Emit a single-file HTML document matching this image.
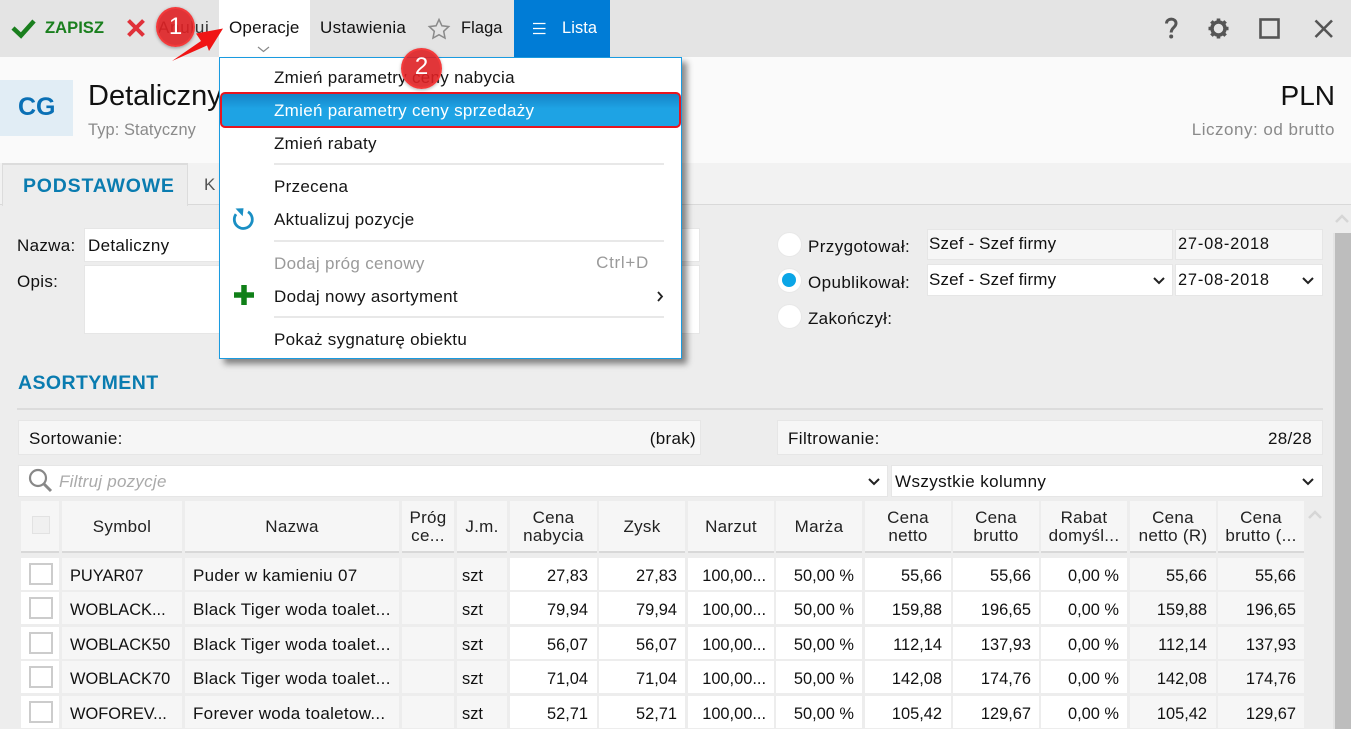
<!DOCTYPE html>
<html lang="pl"><head><meta charset="utf-8"><title>Cennik</title>
<style>
html,body{margin:0;padding:0}
body{width:1351px;height:729px;overflow:hidden;position:relative;background:#ededed;font-family:"Liberation Sans",sans-serif;font-size:17px;letter-spacing:.3px;color:#111}
div,span{position:absolute;box-sizing:border-box}
.t{white-space:nowrap;line-height:22px;height:22px}
svg{position:absolute;overflow:visible}
.box{background:#fff;border:1px solid #e6e6e6}
.gr{background:#f6f6f6;border:1px solid #e6e6e6}
.h{top:501px;height:52px;background:#f6f6f6;border-bottom:2px solid #d8d8d8;text-align:center;line-height:18px;color:#222;display:flex;align-items:center;justify-content:center;padding-top:1px}
.r{height:32px;width:1351px;left:0}
.r div{top:0;height:32px;line-height:36px;white-space:nowrap;overflow:hidden;background:#f6f6f6}
.w{background:#fff!important}
.n,.r .c1,.r .c4{font-size:16.4px;letter-spacing:0}
.n{text-align:right}
.c0{left:21px;width:38px}.c1{left:62px;width:120px;padding-left:8px}.c2{left:185px;width:214px;padding-left:8px}.c3{left:402px;width:52px}.c4{left:457px;width:50px;padding-left:5px}
.c5{left:510px;width:87px;padding-right:9px}.c6{left:599px;width:86px;padding-right:8px}.c7{left:688px;width:86px;padding-right:8px}.c8{left:776px;width:86px;padding-right:8px}.c9{left:865px;width:86px;padding-right:9px}.c10{left:953px;width:86px;padding-right:8px}.c11{left:1041px;width:86px;padding-right:8px}.c12{left:1130px;width:86px;padding-right:9px}.c13{left:1218px;width:86px;padding-right:8px}
.cb{left:8px;top:5px;width:24px;height:22px;background:#fff;border:2px solid #ccc}
.mi{left:54px;white-space:nowrap;line-height:22px;height:22px;color:#151515}
.sep{left:54px;width:390px;height:2px;background:#e8e8e8}
.rad{left:777px;width:25px;height:25px;border-radius:50%;background:#fff;border:1px solid #e8e8e8}
.d{letter-spacing:.8px;font-size:16.4px}
.z{letter-spacing:.15px}
</style></head><body>

<!-- toolbar -->
<div style="left:0;top:0;width:1351px;height:57px;background:#e4e4e4"></div>
<svg style="left:0;top:0" width="1351" height="57">
<path d="M13 28l8 7.500 13-14.500" fill="none" stroke="#1a7f1e" stroke-width="4.500"/>
<path d="M128.500 20.500l15 15M143.500 20.500l-15 15" stroke="#e0313a" stroke-width="4" fill="none"/>
<path d="M439 19.500l2.900 6.300 6.800.8-5 4.700 1.300 6.800-6-3.400-6 3.400 1.300-6.800-5-4.700 6.800-.8z" fill="none" stroke="#8a8a8a" stroke-width="1.500"/>
<path d="M1166.500 23.500c0-5.800 9.500-5.800 9.500-.2 0 4.200-4.800 4.200-4.800 9.200" fill="none" stroke="#555" stroke-width="3"/><circle cx="1171.200" cy="36.500" r="2" fill="#555"/>
<g fill="none" stroke="#555"><circle cx="1218.500" cy="28.500" r="6.500" stroke-width="3.500"/><path stroke-width="3.600" d="M1218.500 18.500v3.500M1218.500 35v3.500M1208.500 28.500h3.500M1225 28.500h3.500M1211.400 21.400l2.500 2.500M1223.100 33.100l2.500 2.500M1225.600 21.400l-2.500 2.500M1213.900 33.100l-2.500 2.500"/></g>
<rect x="1260.500" y="19.500" width="18" height="18" fill="none" stroke="#555" stroke-width="2.600"/>
<path d="M1315.500 20.500l16.500 16.500M1332 20.500l-16.500 16.500" stroke="#555" stroke-width="2.600" fill="none"/>
</svg>
<div class="t" style="left:45px;top:17px;font-weight:bold;color:#1a7f1e;font-size:16.600px;letter-spacing:0">ZAPISZ</div>
<div class="t" style="left:158px;top:17px;color:#333;letter-spacing:.7px">Anuluj</div>
<div style="left:219px;top:0;width:91px;height:58px;background:#fff"></div>
<div class="t" style="left:229px;top:17px;letter-spacing:.2px">Operacje</div>
<svg style="left:0;top:0" width="300" height="60"><path d="M258 47l5.500 4.500 5.500-4.500" fill="none" stroke="#888" stroke-width="1.200"/></svg>
<div class="t" style="left:320px;top:17px">Ustawienia</div>
<div class="t" style="left:461px;top:17px;font-size:16.400px;letter-spacing:.1px">Flaga</div>
<div style="left:514px;top:0;width:96px;height:57px;background:#007cd6"></div>
<svg style="left:0;top:0" width="620" height="57"><path d="M533 23.500h12.500M533 28.500h12.500M533 33.500h12.500" stroke="#fff" stroke-width="1.200"/></svg>
<div class="t" style="left:562px;top:17px;color:#fff;font-size:16.400px;letter-spacing:.1px">Lista</div>

<!-- header -->
<div style="left:0;top:57px;width:1351px;height:106px;background:#fafafa"></div>
<div style="left:0;top:80px;width:73px;height:56px;background:#e1edf5"></div>
<div class="t" style="left:18px;top:94px;font-size:25px;height:26px;line-height:26px;color:#0a70b5;font-weight:bold;letter-spacing:0">CG</div>
<div class="t" style="left:88px;top:79px;font-size:29px;height:34px;line-height:34px;color:#111;letter-spacing:0">Detaliczny</div>
<div class="t" style="left:88px;top:119px;color:#8a8a8a;font-size:16.400px;letter-spacing:.1px">Typ: Statyczny</div>
<div class="t" style="right:16px;top:79px;font-size:28px;height:34px;line-height:34px;letter-spacing:0">PLN</div>
<div class="t" style="right:16px;top:119px;color:#8a8a8a;letter-spacing:.5px">Liczony: od brutto</div>

<!-- tabs -->
<div style="left:0;top:163px;width:1351px;height:42px;background:#f2f2f2;border-bottom:1px solid #d9d9d9"></div>
<div style="left:2px;top:163px;width:186px;height:43px;background:#ededed;border:1px solid #dcdcdc;border-bottom:none;border-top-width:2px"></div>
<div class="t" style="left:23px;top:175px;font-weight:bold;color:#0a7cb0;font-size:19.500px;letter-spacing:.8px">PODSTAWOWE</div>
<div class="t" style="left:204px;top:174px;color:#555;font-size:17px">K</div>

<!-- form -->
<div class="t" style="left:17px;top:235px">Nazwa:</div>
<div class="box" style="left:84px;top:228px;width:616px;height:34px"></div>
<div class="t" style="left:88px;top:235px">Detaliczny</div>
<div class="t" style="left:17px;top:271px">Opis:</div>
<div class="box" style="left:84px;top:265px;width:616px;height:69px"></div>

<div class="rad" style="top:232px"></div>
<div class="rad" style="top:268px"></div>
<div style="left:782px;top:273px;width:14px;height:14px;border-radius:50%;background:#0aa5e6"></div>
<div class="rad" style="top:304px"></div>
<div class="t" style="left:808px;top:236px;letter-spacing:.4px">Przygotował:</div>
<div class="t" style="left:808px;top:272px;letter-spacing:.4px">Opublikował:</div>
<div class="t" style="left:808px;top:308px">Zakończył:</div>
<div class="gr" style="left:927px;top:229px;width:246px;height:31px"></div>
<div class="gr" style="left:1175px;top:229px;width:148px;height:31px"></div>
<div class="t z" style="left:929px;top:233px">Szef - Szef firmy</div>
<div class="t d" style="left:1178px;top:233px">27-08-2018</div>
<div class="box" style="left:927px;top:264px;width:246px;height:32px"></div>
<div class="box" style="left:1175px;top:264px;width:148px;height:32px"></div>
<div class="t z" style="left:929px;top:269px">Szef - Szef firmy</div>
<div class="t d" style="left:1178px;top:269px">27-08-2018</div>

<!-- asortyment -->
<div class="t" style="left:18px;top:372px;font-weight:bold;color:#0a7cb0;font-size:19.500px;letter-spacing:.4px">ASORTYMENT</div>
<div style="left:17px;top:408px;width:1306px;height:2px;background:#dcdcdc"></div>
<div class="gr" style="left:18px;top:420px;width:683px;height:35px"></div>
<div class="t" style="left:29px;top:428px;letter-spacing:.36px">Sortowanie:</div>
<div class="t" style="right:655px;top:428px">(brak)</div>
<div class="gr" style="left:777px;top:420px;width:546px;height:35px"></div>
<div class="t" style="left:788px;top:428px;letter-spacing:.4px">Filtrowanie:</div>
<div class="t" style="right:39px;top:428px">28/28</div>
<div class="box" style="left:18px;top:465px;width:870px;height:32px"></div>
<div class="box" style="left:891px;top:465px;width:432px;height:32px"></div>
<div class="t" style="left:59px;top:471px;font-style:italic;color:#aaa;letter-spacing:.25px">Filtruj pozycje</div>
<div class="t" style="left:895px;top:471px;letter-spacing:.4px">Wszystkie kolumny</div>
<svg style="left:0;top:0" width="1351" height="729">
<circle cx="38" cy="478" r="8" fill="none" stroke="#888" stroke-width="2.200"/><path d="M44 484l7 7" stroke="#888" stroke-width="3"/>
<g fill="none" stroke="#222" stroke-width="2"><path d="M1154 278l5 5 5-5M1303 278l5 5 5-5M869 479l5 5 5-5M1303 479l5 5 5-5"/></g>
<g fill="none" stroke="#d6d6d6" stroke-width="2.500"><path d="M1309 518l6-6 6 6M1336 222l6-6 6 6"/></g>
</svg>

<!-- scrollbar -->
<div style="left:1333px;top:233px;width:18px;height:496px;background:#bdbdbd;border-left:2px solid #e4e4e4"></div>

<!-- grid header -->
<div class="h c0" style="padding:0"></div>
<div style="left:32px;top:516px;width:18px;height:18px;background:#f0f0f0;border:1px solid #e2e2e2"></div>
<div class="h c1" style="padding:1px 0 0">Symbol</div>
<div class="h c2" style="padding:1px 0 0">Nazwa</div>
<div class="h c3">Próg<br>ce...</div>
<div class="h c4" style="padding:1px 0 0">J.m.</div>
<div class="h c5" style="padding:1px 0 0">Cena<br>nabycia</div>
<div class="h c6" style="padding:1px 0 0">Zysk</div>
<div class="h c7" style="padding:1px 0 0">Narzut</div>
<div class="h c8" style="padding:1px 0 0">Marża</div>
<div class="h c9" style="padding:1px 0 0">Cena<br>netto</div>
<div class="h c10" style="padding:1px 0 0">Cena<br>brutto</div>
<div class="h c11" style="padding:1px 0 0">Rabat<br>domyśl...</div>
<div class="h c12" style="padding:1px 0 0">Cena<br>netto (R)</div>
<div class="h c13" style="padding:1px 0 0">Cena<br>brutto (...</div>

<!-- rows -->
<div class="r" style="top:558px"><div class="c0 w"><span class="cb"></span></div><div class="c1">PUYAR07</div><div class="c2">Puder w kamieniu 07</div><div class="c3"></div><div class="c4">szt</div><div class="c5 w n">27,83</div><div class="c6 w n">27,83</div><div class="c7 w n">100,00...</div><div class="c8 w n">50,00 %</div><div class="c9 w n">55,66</div><div class="c10 w n">55,66</div><div class="c11 w n">0,00 %</div><div class="c12 n">55,66</div><div class="c13 n">55,66</div></div>
<div class="r" style="top:592px"><div class="c0 w"><span class="cb"></span></div><div class="c1">WOBLACK...</div><div class="c2">Black Tiger woda toalet...</div><div class="c3"></div><div class="c4">szt</div><div class="c5 w n">79,94</div><div class="c6 w n">79,94</div><div class="c7 w n">100,00...</div><div class="c8 w n">50,00 %</div><div class="c9 w n">159,88</div><div class="c10 w n">196,65</div><div class="c11 w n">0,00 %</div><div class="c12 n">159,88</div><div class="c13 n">196,65</div></div>
<div class="r" style="top:627px"><div class="c0 w"><span class="cb"></span></div><div class="c1">WOBLACK50</div><div class="c2">Black Tiger woda toalet...</div><div class="c3"></div><div class="c4">szt</div><div class="c5 w n">56,07</div><div class="c6 w n">56,07</div><div class="c7 w n">100,00...</div><div class="c8 w n">50,00 %</div><div class="c9 w n">112,14</div><div class="c10 w n">137,93</div><div class="c11 w n">0,00 %</div><div class="c12 n">112,14</div><div class="c13 n">137,93</div></div>
<div class="r" style="top:661px"><div class="c0 w"><span class="cb"></span></div><div class="c1">WOBLACK70</div><div class="c2">Black Tiger woda toalet...</div><div class="c3"></div><div class="c4">szt</div><div class="c5 w n">71,04</div><div class="c6 w n">71,04</div><div class="c7 w n">100,00...</div><div class="c8 w n">50,00 %</div><div class="c9 w n">142,08</div><div class="c10 w n">174,76</div><div class="c11 w n">0,00 %</div><div class="c12 n">142,08</div><div class="c13 n">174,76</div></div>
<div class="r" style="top:696px"><div class="c0 w"><span class="cb"></span></div><div class="c1">WOFOREV...</div><div class="c2">Forever woda toaletow...</div><div class="c3"></div><div class="c4">szt</div><div class="c5 w n">52,71</div><div class="c6 w n">52,71</div><div class="c7 w n">100,00...</div><div class="c8 w n">50,00 %</div><div class="c9 w n">105,42</div><div class="c10 w n">129,67</div><div class="c11 w n">0,00 %</div><div class="c12 n">105,42</div><div class="c13 n">129,67</div></div>

<!-- menu -->
<div style="left:219px;top:57px;width:463px;height:302px;background:#fff;border:1px solid #1a9be0;box-shadow:5px 5px 6px rgba(0,0,0,.45)">
 <div class="mi" style="top:9px">Zmień parametry ceny nabycia</div>
 <div style="left:0;top:34px;width:461px;height:36px;border-radius:5px;border:2px solid #e8151f;background:linear-gradient(#1583c6,#1ea3e4 45%,#1ea3e4)"></div>
 <div class="mi" style="top:42px;color:#fff">Zmień parametry ceny sprzedaży</div>
 <div class="mi" style="top:75px">Zmień rabaty</div>
 <div class="sep" style="top:105px"></div>
 <div class="mi" style="top:118px">Przecena</div>
 <div class="mi" style="top:151px">Aktualizuj pozycje</div>
 <div class="sep" style="top:182px"></div>
 <div class="mi" style="top:195px;color:#9a9a9a">Dodaj próg cenowy</div>
 <div class="mi" style="top:194px;left:auto;right:32px;color:#9a9a9a;letter-spacing:.7px">Ctrl+D</div>
 <div class="mi" style="top:228px">Dodaj nowy asortyment</div>
 <div class="sep" style="top:258px"></div>
 <div class="mi" style="top:271px">Pokaż sygnaturę obiektu</div>
</div>
<svg style="left:0;top:0" width="1351" height="729">
<path d="M248 211.800A9 9 0 1 1 236 214.200" fill="none" stroke="#1a8fc4" stroke-width="2.800"/><path d="M235.500 208.500l8-.2-.8 8z" fill="#1a8fc4"/>
<path d="M244 285v20M234 295h20" stroke="#108018" stroke-width="5.500"/>
<path d="M658 292l4 4.500-4 4.500" fill="none" stroke="#222" stroke-width="1.800"/>
</svg>

<!-- annotations -->
<div style="left:156px;top:7px;width:39px;height:40px;border-radius:50%;background:rgba(222,32,36,.9);border:2px solid rgba(245,60,60,.9);box-shadow:0 1px 3px rgba(0,0,0,.35);color:#fff;font-size:24px;line-height:36px;text-align:center;letter-spacing:0">1</div>
<div style="left:401px;top:48px;width:41px;height:41px;border-radius:50%;background:rgba(222,32,36,.9);border:2px solid rgba(245,60,60,.9);box-shadow:0 1px 3px rgba(0,0,0,.3);color:#fff;font-size:24px;line-height:34px;text-align:center;letter-spacing:0">2</div>
<svg style="left:0;top:0" width="300" height="80"><path d="M223 28.500L196 33.500 201 41 172 61 207 45.500 209 51z" fill="#f01414"/></svg>

</body></html>
